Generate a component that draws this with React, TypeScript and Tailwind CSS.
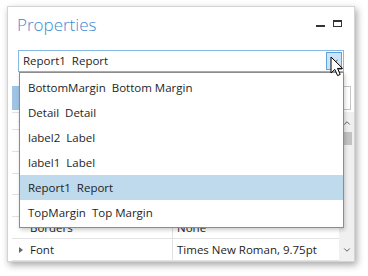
import { ChevronDown, ChevronUp } from "lucide-react";

const items = [
  "BottomMargin  Bottom Margin",
  "Detail  Detail",
  "label2  Label",
  "label1  Label",
  "Report1  Report",
  "TopMargin  Top Margin",
];

const gridRows = [
  { name: "", value: "" },
  { name: "", value: "" },
  { name: "", value: "" },
  { name: "", value: "" },
  { name: "Borders", value: "None" },
  { name: "Font", value: "Times New Roman, 9.75pt", expandable: true },
];

const Cursor = () => (
  <svg width="14" height="22" viewBox="0 0 14 22" className="absolute left-[330px] top-[56px]">
    <path
      d="M1 1 L1 17 L4.8 13.4 L7.6 19.6 L10.2 18.4 L7.5 12.4 L12.6 12.4 Z"
      fill="#ffffff"
      stroke="#000000"
      strokeWidth="1"
      strokeLinejoin="round"
    />
  </svg>
);

const App = () => {
  return (
    <div
      className="relative w-[368px] h-[276px] bg-white overflow-hidden text-[#1e1e1e]"
      style={{ fontFamily: '"Open Sans", "Noto Sans", sans-serif' }}
    >
      <div className="absolute left-[7px] top-[6px] w-[348px] h-[256px] bg-white border border-[#d4d4d4] shadow-[2px_3px_7px_rgba(0,0,0,0.35)] flex flex-col">
        {/* title bar */}
        <div className="flex items-start justify-between h-[40px] pl-[9px] pr-[12px]">
          <span className="text-[17px] font-light leading-none mt-[9px] text-[#3a8bd8]">
            Properties
          </span>
          <div className="flex items-center gap-[8px] mt-[13px]">
            <div className="w-[9px] h-[2px] bg-[#333] mt-[4px]" />
            <div className="w-[9px] h-[7px] border border-[#333] border-t-[2px]" />
          </div>
        </div>

        {/* combobox */}
        <div className="mx-[10px] mt-[3px] h-[22px] border border-[#86b9e6] flex items-center justify-between pl-[4px] pr-[1px]">
          <span className="text-[11.5px] whitespace-pre">Report1  Report</span>
          <div className="w-[16px] h-[18px] bg-[#cce4f7] border border-[#5fa3dd] flex items-center justify-center">
            <ChevronDown className="size-[11px] text-[#777]" strokeWidth={2.2} />
          </div>
        </div>

        {/* toolbar */}
        <div className="flex items-center gap-[4px] mt-[14px] pl-[4px] pr-[3px] h-[24px]">
          <div className="w-[22px] h-[24px] bg-[#9fc3e4]" />
          <div className="flex-1 h-[24px] border border-[#c5c5c5]" />
        </div>

        {/* grid */}
        <div className="flex flex-1 mt-[2px] pl-[4px] min-h-0">
          <div className="flex-1 flex flex-col border-t border-[#e2e2e2]">
            <div className="h-[17px] border-b border-[#e2e2e2] flex items-center pl-[8px]">
              <div className="w-0 h-0 border-l-[4px] border-l-[#666] border-y-[3.5px] border-y-transparent rotate-45" />
            </div>
            {gridRows.map((row, i) => (
              <div key={i} className="h-[22px] border-b border-[#e2e2e2] flex text-[11.5px]">
                <div className="w-[161px] flex items-center border-r border-[#e2e2e2] pl-[7px] gap-[6px]">
                  <div className="w-[5px]">
                    {row.expandable && (
                      <div className="w-0 h-0 border-l-[4px] border-l-[#666] border-y-[3.5px] border-y-transparent" />
                    )}
                  </div>
                  <span>{row.name}</span>
                </div>
                <div className="flex items-center pl-[4px]">{row.value}</div>
              </div>
            ))}
          </div>
          <div className="w-[15px] bg-[#f0f0f0] flex flex-col items-center">
            <ChevronUp className="size-[10px] text-[#606060] mt-[6px]" strokeWidth={2.4} />
            <div className="w-[10px] h-[13px] bg-[#c2c2c2] mt-[4px]" />
            <div className="flex-1" />
            <ChevronDown className="size-[10px] text-[#606060] mb-[6px]" strokeWidth={2.4} />
          </div>
        </div>
      </div>

      {/* dropdown list */}
      <div className="absolute left-[19px] top-[72px] w-[325px] bg-white border border-[#8c8c8c] shadow-[1px_2px_4px_rgba(0,0,0,0.2)] py-[2px]">
        {items.map((item) => (
          <div
            key={item}
            className={`h-[25px] flex items-center pl-[8px] text-[11.5px] ${
              item === "Report1  Report" ? "bg-[#bfd9ed]" : ""
            }`}
          >
            <span className="whitespace-pre">{item}</span>
          </div>
        ))}
      </div>

      <Cursor />
    </div>
  );
};

export default App;
